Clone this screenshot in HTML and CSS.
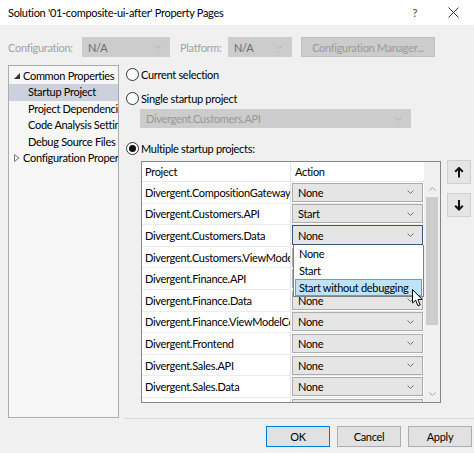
FILE: index.html
```html
<!DOCTYPE html>
<html>
<head>
<meta charset="utf-8">
<link rel="stylesheet" href="styles.css">
</head>
<body>
<div class="titlebar">
  <span class="title">Solution '01-composite-ui-after' Property Pages</span>
  <span class="help">?</span>
  <svg class="close" width="11" height="11" viewBox="0 0 11 11"><path d="M0.5 0.5 L10.5 10.5 M10.5 0.5 L0.5 10.5" stroke="#333" stroke-width="1" fill="none"/></svg>
</div>

<div class="configrow">
  <span class="lbl lbl-config">Configuration:</span>
  <div class="combo dis combo-config"><span class="na">N/A</span><svg class="chev" width="7" height="4" viewBox="0 0 7 4"><path d="M0.5 0.5 L3.5 3.5 L6.5 0.5" stroke="#b0b0b0" fill="none"/></svg></div>
  <span class="lbl lbl-platform">Platform:</span>
  <div class="combo dis combo-platform"><span class="na">N/A</span><svg class="chev" width="7" height="4" viewBox="0 0 7 4"><path d="M0.5 0.5 L3.5 3.5 L6.5 0.5" stroke="#b0b0b0" fill="none"/></svg></div>
  <div class="btn dis btn-cm">Configuration Manager...</div>
</div>

<div class="main">
  <div class="tree">
    <div class="tree-item lvl0"><svg class="tri" width="6" height="6" viewBox="0 0 6 6"><path d="M6 0 L6 6 L0 6 Z" fill="#333"/></svg>Common Properties</div>
    <div class="tree-item lvl1 sel">Startup Project</div>
    <div class="tree-item lvl1">Project Dependencies</div>
    <div class="tree-item lvl1">Code Analysis Settings</div>
    <div class="tree-item lvl1">Debug Source Files</div>
    <div class="tree-item lvl0"><svg class="tri" width="6" height="8" viewBox="0 0 6 8"><path d="M0.5 0.5 L5 4 L0.5 7.5 Z" fill="none" stroke="#777"/></svg>Configuration Properties</div>
  </div>

  <div class="right">
    <div class="radio-row"><span class="radio"></span><span>Current selection</span></div>
    <div class="radio-row r2"><span class="radio"></span><span>Single startup project</span></div>
    <div class="combo dis combo-single"><span class="gtext">Divergent.Customers.API</span><svg class="chev" width="7" height="4" viewBox="0 0 7 4"><path d="M0.5 0.5 L3.5 3.5 L6.5 0.5" stroke="#b0b0b0" fill="none"/></svg></div>
    <div class="radio-row r3"><span class="radio on"></span><span>Multiple startup projects:</span></div>

    <div class="gridwrap">
      <div class="grid">
        <div class="gbody">
          <div class="ghead"><div class="c1">Project</div><div class="c2">Action</div></div>
          <div class="grow"><div class="c1">Divergent.CompositionGateway</div><div class="c2"><div class="dd">None<svg class="chev" width="7" height="4" viewBox="0 0 7 4"><path d="M0.5 0.5 L3.5 3.5 L6.5 0.5" stroke="#707070" fill="none"/></svg></div></div></div>
          <div class="grow"><div class="c1">Divergent.Customers.API</div><div class="c2"><div class="dd">Start<svg class="chev" width="7" height="4" viewBox="0 0 7 4"><path d="M0.5 0.5 L3.5 3.5 L6.5 0.5" stroke="#707070" fill="none"/></svg></div></div></div>
          <div class="grow"><div class="c1">Divergent.Customers.Data</div><div class="c2"><div class="dd focus">None<svg class="chev" width="7" height="4" viewBox="0 0 7 4"><path d="M0.5 0.5 L3.5 3.5 L6.5 0.5" stroke="#707070" fill="none"/></svg></div></div></div>
          <div class="grow"><div class="c1">Divergent.Customers.ViewModelComposition</div><div class="c2"><div class="dd"></div></div></div>
          <div class="grow"><div class="c1">Divergent.Finance.API</div><div class="c2"><div class="dd"></div></div></div>
          <div class="grow"><div class="c1">Divergent.Finance.Data</div><div class="c2"><div class="dd">None<svg class="chev" width="7" height="4" viewBox="0 0 7 4"><path d="M0.5 0.5 L3.5 3.5 L6.5 0.5" stroke="#707070" fill="none"/></svg></div></div></div>
          <div class="grow"><div class="c1">Divergent.Finance.ViewModelComposition</div><div class="c2"><div class="dd">None<svg class="chev" width="7" height="4" viewBox="0 0 7 4"><path d="M0.5 0.5 L3.5 3.5 L6.5 0.5" stroke="#707070" fill="none"/></svg></div></div></div>
          <div class="grow"><div class="c1">Divergent.Frontend</div><div class="c2"><div class="dd">None<svg class="chev" width="7" height="4" viewBox="0 0 7 4"><path d="M0.5 0.5 L3.5 3.5 L6.5 0.5" stroke="#707070" fill="none"/></svg></div></div></div>
          <div class="grow"><div class="c1">Divergent.Sales.API</div><div class="c2"><div class="dd">None<svg class="chev" width="7" height="4" viewBox="0 0 7 4"><path d="M0.5 0.5 L3.5 3.5 L6.5 0.5" stroke="#707070" fill="none"/></svg></div></div></div>
          <div class="grow"><div class="c1">Divergent.Sales.Data</div><div class="c2"><div class="dd">None<svg class="chev" width="7" height="4" viewBox="0 0 7 4"><path d="M0.5 0.5 L3.5 3.5 L6.5 0.5" stroke="#707070" fill="none"/></svg></div></div></div>
          <div class="grow"><div class="c1"></div><div class="c2"><div class="dd"></div></div></div>
        </div>
        <div class="scroll">
          <svg class="sarrow up" width="7" height="4" viewBox="0 0 7 4"><path d="M0.5 3.5 L3.5 0.5 L6.5 3.5" stroke="#a0a0a0" fill="none"/></svg>
          <div class="thumb"></div>
          <svg class="sarrow down" width="7" height="4" viewBox="0 0 7 4"><path d="M0.5 0.5 L3.5 3.5 L6.5 0.5" stroke="#a0a0a0" fill="none"/></svg>
        </div>
        <div class="droplist">
          <div class="ditem">None</div>
          <div class="ditem">Start</div>
          <div class="ditem hl">Start without debugging</div>
        </div>
      </div>
      <div class="movebtns">
        <div class="mbtn"><svg width="10" height="11" viewBox="0 0 10 11"><path d="M5 1 L5 10.5 M1.2 4.8 L5 1 L8.8 4.8" stroke="#111" stroke-width="2" fill="none"/></svg></div>
        <div class="mbtn"><svg width="10" height="11" viewBox="0 0 10 11"><path d="M5 0 L5 9.5 M1.2 5.7 L5 9.5 L8.8 5.7" stroke="#111" stroke-width="2" fill="none"/></svg></div>
      </div>
    </div>
  </div>
</div>

<div class="footer">
  <div class="btn def">OK</div>
  <div class="btn">Cancel</div>
  <div class="btn">Apply</div>
</div>

<svg class="cursor" width="12" height="18" viewBox="0 0 12 18"><path d="M0.5 0.5 L0.5 14 L3.6 11.2 L6 16.8 L8.2 15.9 L5.9 10.5 L10.2 10.5 Z" fill="#fff" stroke="#000" stroke-width="1"/></svg>
</body>
</html>
```
FILE: styles.css
```css
* { box-sizing: border-box; }
html, body { margin: 0; padding: 0; }
body {
  width: 474px;
  height: 453px;
  overflow: hidden;
  background: #f0f0f0;
  font-family: "Lato", "Open Sans", sans-serif;
  font-size: 11px;
  letter-spacing: -0.3px;
  color: #000;
  position: relative;
}
.titlebar {
  height: 25px;
  background: #fff;
  display: flex;
  align-items: center;
  padding-left: 8px;
  font-size: 11px;
}
.title { flex: 1; }
.help { color: #444; margin-right: 31px; }
.close { margin-right: 15px; }

.configrow {
  display: flex;
  align-items: center;
  height: 20px;
  margin-top: 12px;
  padding-left: 8px;
}
.lbl { color: #a2a2a2; white-space: nowrap; }
.lbl-config { width: 74px; }
.lbl-platform { width: 48px; margin-left: 10px; }
.combo {
  height: 20px;
  display: flex;
  align-items: center;
  justify-content: space-between;
  padding: 0 8px 0 5px;
  border: 1px solid #cccccc;
}
.combo.dis { background: #cccccc; }
.na { color: #6a6a6a; }
.gtext { color: #979797; }
.combo-config { width: 88px; }
.combo-platform { width: 64px; }
.btn {
  height: 21px;
  display: flex;
  align-items: center;
  justify-content: center;
  border: 1px solid #adadad;
  background: #e1e1e1;
  white-space: nowrap;
}
.btn.dis { background: #cccccc; border-color: #bfbfbf; color: #9a9a9a; }
.btn-cm { width: 134px; margin-left: 9px; height: 20px; }

.main {
  display: flex;
  margin-top: 8px;
  height: 354px;
}
.tree {
  margin-left: 8px;
  width: 111px;
  height: 353px;
  border: 1px solid #acacac;
  background: #f6f6f6;
  padding-top: 2px;
  overflow: hidden;
}
.tree-item {
  height: 16.4px;
  line-height: 16.4px;
  white-space: nowrap;
  overflow: hidden;
  display: flex;
  align-items: center;
}
.tree-item.lvl0 { padding-left: 5px; }
.tree-item.lvl1 { padding-left: 19px; }
.tri { margin-right: 3px; flex: none; }
.tree-item.sel { background: #cdd1dd; }

.right {
  flex: 1;
  margin-left: 6px;
  border-bottom: 1px solid #d5d5d5;
}
.radio-row {
  display: flex;
  align-items: center;
  height: 18px;
}
.radio-row.r2 { margin-top: 6px; }
.radio-row.r3 { margin-top: 11px; }
.radio {
  width: 13px;
  height: 13px;
  border: 1px solid #333;
  border-radius: 50%;
  background: #fff;
  margin-left: 1px;
  margin-right: 2px;
  display: flex;
  align-items: center;
  justify-content: center;
}
.radio.on::after {
  content: "";
  width: 7px;
  height: 7px;
  border-radius: 50%;
  background: #111;
}
.combo-single {
  margin-top: 2px;
  margin-left: 15px;
  width: 271px;
  height: 19px;
}

.gridwrap {
  display: flex;
  margin-top: 4px;
  margin-left: 16px;
}
.grid {
  width: 300px;
  height: 242px;
  border: 1px solid #828790;
  background: #fff;
  display: flex;
  overflow: hidden;
  position: relative;
}
.gbody { width: 282px; }
.ghead, .grow {
  display: flex;
}
.ghead { height: 20px; border-bottom: 1px solid #e8e8e8; }
.grow { height: 21.6px; border-bottom: 1px solid #ececec; }
.c1 {
  width: 149px;
  border-right: 1px solid #e3e3e3;
  padding-left: 3px;
  white-space: nowrap;
  overflow: hidden;
  display: flex;
  align-items: center;
}
.c2 {
  flex: 1;
  padding-left: 1px;
  display: flex;
  align-items: center;
}
.ghead .c2 { padding-left: 4px; }
.dd {
  width: 131px;
  height: 19px;
  background: #e5e5e5;
  border: 1px solid #acacac;
  display: flex;
  align-items: center;
  justify-content: space-between;
  padding: 0 8px 0 5px;
}
.dd.focus { border-color: #3d5478; height: 20px; }
.scroll {
  width: 16px;
  background: #f0f0f0;
  position: relative;
  display: flex;
  flex-direction: column;
  align-items: center;
}
.sarrow.up { margin-top: 25px; }
.thumb {
  width: 12px;
  height: 128px;
  background: #cdcdcd;
  margin-top: 6px;
}
.sarrow.down { margin-top: auto; margin-bottom: 6px; }
.droplist {
  position: absolute;
  left: 151px;
  top: 83px;
  width: 131px;
  height: 52px;
  background: #fff;
  border: 1px solid #808080;
  border-top: none;
  padding: 0 1px;
}
.ditem {
  height: 17px;
  display: flex;
  align-items: center;
  padding-left: 4px;
  white-space: nowrap;
}
.ditem.hl {
  background: #bfe3f6;
  border: 1px solid #4ea7da;
  padding-left: 3px;
}
.movebtns {
  margin-left: 6px;
  margin-top: -1px;
  display: flex;
  flex-direction: column;
  gap: 9px;
}
.mbtn {
  width: 24px;
  height: 24px;
  background: #e5e5e5;
  border: 1px solid #d0d0d0;
  display: flex;
  align-items: center;
  justify-content: center;
}

.footer {
  display: flex;
  justify-content: flex-end;
  gap: 7px;
  padding-top: 7px;
  padding-right: 2px;
}
.footer .btn { width: 64px; height: 21px; }
.footer .btn.def { border-color: #0078d7; }

.cursor {
  position: absolute;
  left: 412px;
  top: 289px;
}
```
